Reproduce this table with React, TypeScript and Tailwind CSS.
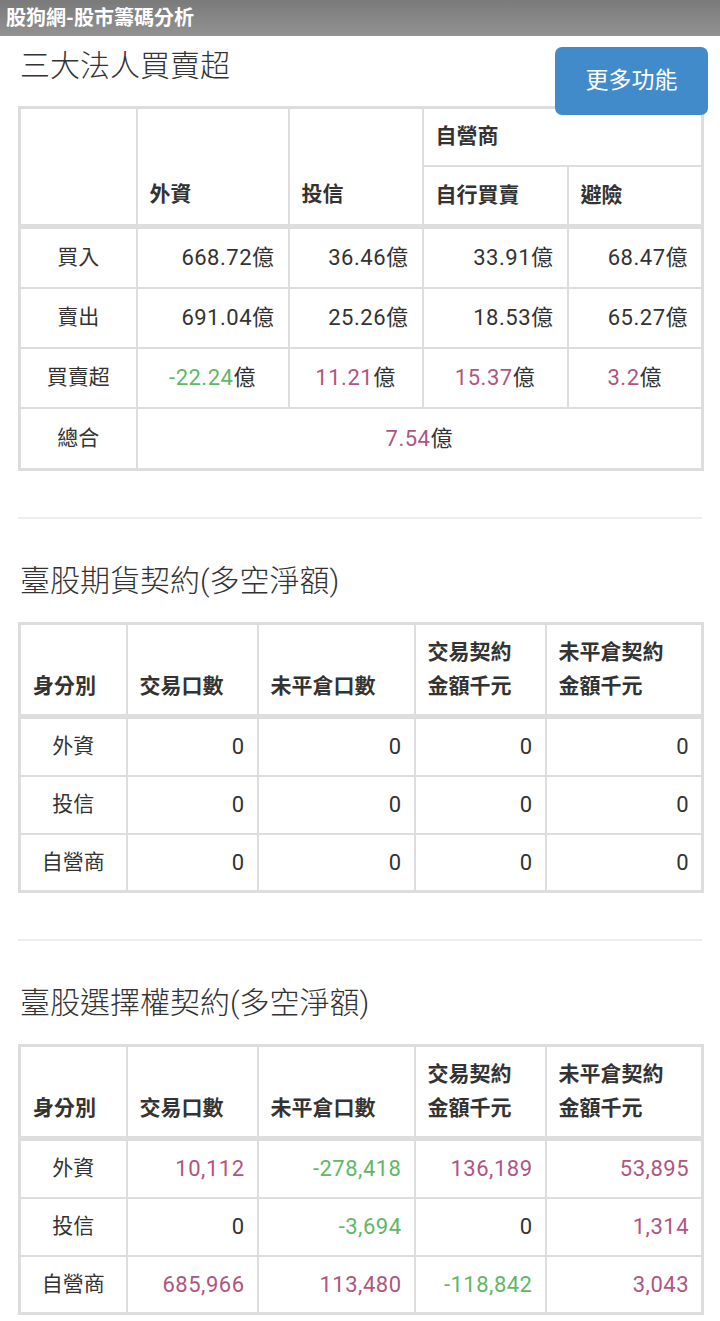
import React from "react";

type Cell = { v: string; c?: "g" | "p" };

const num = (cell: Cell) =>
  cell.c === "g" ? "text-[#5fb865]" : cell.c === "p" ? "text-[#b0557f]" : "text-[#333]";

const td = "border-2 border-[#dddddd]";
const th = `${td} px-3 text-left text-[21px] font-bold text-[#333]`;

function ContractTable({ rows }: { rows: { name: string; cells: Cell[] }[] }) {
  return (
    <table className="w-[683px] table-fixed border-collapse border-[3px] border-[#dddddd]">
      <colgroup>
        <col className="w-[107px]" />
        <col className="w-[131px]" />
        <col className="w-[157px]" />
        <col className="w-[131px]" />
        <col className="w-[157px]" />
      </colgroup>
      <thead>
        <tr className="h-[93px]">
          {["身分別", "交易口數", "未平倉口數"].map((h) => (
            <th key={h} className={`${th} border-b-[5px] pb-[11px] align-bottom leading-[34px]`}>
              {h}
            </th>
          ))}
          <th className={`${th} border-b-[5px] pb-[11px] align-bottom leading-[34px]`}>
            交易契約
            <br />
            金額千元
          </th>
          <th className={`${th} border-b-[5px] pb-[11px] align-bottom leading-[34px]`}>
            未平倉契約
            <br />
            金額千元
          </th>
        </tr>
      </thead>
      <tbody>
        {rows.map((r, ri) => (
          <tr key={r.name} className={ri === 0 ? "h-[59px]" : "h-[58px]"}>
            <td className={`${td} text-center text-[21px] text-[#333]`}>{r.name}</td>
            {r.cells.map((c, i) => (
              <td key={i} className={`${td} pr-[12px] text-right text-[22px] tracking-[0.5px] ${num(c)}`}>
                {c.v}
              </td>
            ))}
          </tr>
        ))}
      </tbody>
    </table>
  );
}

function Money({ v, c }: Cell) {
  return (
    <span>
      <span className={num({ v, c })}>{v}</span>
      <span className="text-[#333]">億</span>
    </span>
  );
}

export default function App() {
  const font = { fontFamily: "Roboto, 'Noto Sans CJK TC', sans-serif" };
  const val = `${td} pr-[13px] text-right tracking-[0.5px]`;
  return (
    <div className="relative w-[720px] bg-white pb-[9px]" style={font}>
      <div className="flex h-[36px] items-center bg-gradient-to-b from-[#7a7a7a] to-[#929292] px-[6px] text-[20px] font-bold text-white">
        股狗網-股市籌碼分析
      </div>

      <button className="absolute left-[555px] top-[47px] z-10 flex h-[68px] w-[153px] items-center justify-center rounded-[7px] bg-[#428bca] text-[23px] text-white">
        更多功能
      </button>

      <div className="px-[18px]">
        <h2 className="mt-[9px] mb-[21px] flex h-[40px] items-center pl-[2px] text-[30px] font-light text-[#333]">
          三大法人買賣超
        </h2>

        <table className="w-[683px] table-fixed border-collapse border-[3px] border-[#dddddd]">
          <colgroup>
            <col className="w-[117px]" />
            <col className="w-[152px]" />
            <col className="w-[134px]" />
            <col className="w-[145px]" />
            <col className="w-[135px]" />
          </colgroup>
          <thead>
            <tr className="h-[58px]">
              <th rowSpan={2} className={`${td} border-b-[5px]`}></th>
              <th rowSpan={2} className={`${th} border-b-[5px] pb-[14px] align-bottom`}>
                外資
              </th>
              <th rowSpan={2} className={`${th} border-b-[5px] pb-[14px] align-bottom`}>
                投信
              </th>
              <th colSpan={2} className={th}>
                自營商
              </th>
            </tr>
            <tr className="h-[61px]">
              <th className={`${th} border-b-[5px]`}>自行買賣</th>
              <th className={`${th} border-b-[5px]`}>避險</th>
            </tr>
          </thead>
          <tbody className="text-[22px] text-[#333]">
            <tr className="h-[61px]">
              <td className={`${td} text-center text-[21px]`}>買入</td>
              <td className={val}>668.72億</td>
              <td className={val}>36.46億</td>
              <td className={val}>33.91億</td>
              <td className={val}>68.47億</td>
            </tr>
            <tr className="h-[60px]">
              <td className={`${td} text-center text-[21px]`}>賣出</td>
              <td className={val}>691.04億</td>
              <td className={val}>25.26億</td>
              <td className={val}>18.53億</td>
              <td className={val}>65.27億</td>
            </tr>
            <tr className="h-[60px]">
              <td className={`${td} text-center text-[21px]`}>買賣超</td>
              <td className={`${td} text-center tracking-[0.5px]`}><Money v="-22.24" c="g" /></td>
              <td className={`${td} text-center tracking-[0.5px]`}><Money v="11.21" c="p" /></td>
              <td className={`${td} text-center tracking-[0.5px]`}><Money v="15.37" c="p" /></td>
              <td className={`${td} text-center tracking-[0.5px]`}><Money v="3.2" c="p" /></td>
            </tr>
            <tr className="h-[62px]">
              <td className={`${td} text-center text-[21px]`}>總合</td>
              <td colSpan={4} className={`${td} text-center tracking-[0.5px]`}><Money v="7.54" c="p" /></td>
            </tr>
          </tbody>
        </table>

        <hr className="mt-[46px] border-t-2 border-[#eeeeee]" />

        <h2 className="mt-[41px] mb-[22px] flex h-[40px] items-center pl-[2px] text-[30px] font-light text-[#333]">
          臺股期貨契約(多空淨額)
        </h2>

        <ContractTable
          rows={[
            { name: "外資", cells: [{ v: "0" }, { v: "0" }, { v: "0" }, { v: "0" }] },
            { name: "投信", cells: [{ v: "0" }, { v: "0" }, { v: "0" }, { v: "0" }] },
            { name: "自營商", cells: [{ v: "0" }, { v: "0" }, { v: "0" }, { v: "0" }] },
          ]}
        />

        <hr className="mt-[46px] border-t-2 border-[#eeeeee]" />

        <h2 className="mt-[41px] mb-[22px] flex h-[40px] items-center pl-[2px] text-[30px] font-light text-[#333]">
          臺股選擇權契約(多空淨額)
        </h2>

        <ContractTable
          rows={[
            {
              name: "外資",
              cells: [
                { v: "10,112", c: "p" },
                { v: "-278,418", c: "g" },
                { v: "136,189", c: "p" },
                { v: "53,895", c: "p" },
              ],
            },
            {
              name: "投信",
              cells: [{ v: "0" }, { v: "-3,694", c: "g" }, { v: "0" }, { v: "1,314", c: "p" }],
            },
            {
              name: "自營商",
              cells: [
                { v: "685,966", c: "p" },
                { v: "113,480", c: "p" },
                { v: "-118,842", c: "g" },
                { v: "3,043", c: "p" },
              ],
            },
          ]}
        />
      </div>
    </div>
  );
}
